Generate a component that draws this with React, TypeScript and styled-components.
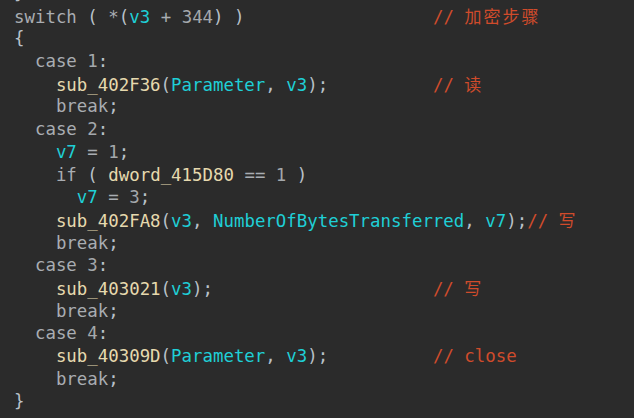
import React from "react";
import styled, { createGlobalStyle } from "styled-components";

const GlobalStyle = createGlobalStyle`
  html, body {
    margin: 0;
    padding: 0;
    background: #2b2b2b;
    overflow: hidden;
  }
`;

type Kind = "kw" | "num" | "fn" | "var" | "punc" | "op" | "cmt" | "ws";

const colors: Record<Kind, string> = {
  kw: "#a9adb2",
  num: "#a4a8ac",
  fn: "#e6d9ae",
  var: "#1fcfd6",
  punc: "#b9c1c9",
  op: "#a9adb2",
  cmt: "#d04b2b",
  ws: "inherit",
};

const Viewport = styled.div`
  width: 634px;
  height: 418px;
  overflow: hidden;
  background: #2b2b2b;
`;

const Code = styled.div`
  display: flex;
  flex-direction: column;
  margin-top: -18px;
  padding-left: 14px;
  font-family: "DejaVu Sans Mono", "Liberation Mono", "Noto Sans CJK SC", monospace;
  font-size: 17.4px;
`;

const Line = styled.div`
  height: 22.7px;
  line-height: 22.7px;
  white-space: pre;
`;

const Tok = styled.span<{ $k: Kind }>`
  color: ${(p) => colors[p.$k]};
`;

const Cjk = styled.span`
  font-family: "Noto Sans CJK SC", sans-serif;
  font-size: 17px;
  letter-spacing: 2px;
`;

type T = [Kind, string];

const k = (s: string): T => ["kw", s];
const n = (s: string): T => ["num", s];
const f = (s: string): T => ["fn", s];
const v = (s: string): T => ["var", s];
const p = (s: string): T => ["punc", s];
const o = (s: string): T => ["op", s];
const w = (s: string): T => ["ws", s];
const c = (s: string): T => ["cmt", s];

const pad = (toks: T[], col: number): T => {
  const len = toks.reduce((a, t) => a + t[1].length, 0);
  return w(" ".repeat(Math.max(0, col - len)));
};

const withComment = (toks: T[], comment: string): T[] => [
  ...toks,
  pad(toks, 40),
  c(comment),
];

const lines: T[][] = [
  [p("}")],
  withComment(
    [k("switch"), w(" "), p("("), w(" "), o("*"), p("("), v("v3"), w(" "), o("+"), w(" "), n("344"), p(")"), w(" "), p(")")],
    "// 加密步骤"
  ),
  [p("{")],
  [w("  "), k("case"), w(" "), n("1"), p(":")],
  withComment(
    [w("    "), f("sub_402F36"), p("("), v("Parameter"), p(","), w(" "), v("v3"), p(")"), p(";")],
    "// 读"
  ),
  [w("    "), k("break"), p(";")],
  [w("  "), k("case"), w(" "), n("2"), p(":")],
  [w("    "), v("v7"), w(" "), o("="), w(" "), n("1"), p(";")],
  [w("    "), k("if"), w(" "), p("("), w(" "), f("dword_415D80"), w(" "), o("=="), w(" "), n("1"), w(" "), p(")")],
  [w("      "), v("v7"), w(" "), o("="), w(" "), n("3"), p(";")],
  [
    w("    "), f("sub_402FA8"), p("("), v("v3"), p(","), w(" "), v("NumberOfBytesTransferred"),
    p(","), w(" "), v("v7"), p(")"), p(";"), c("// 写"),
  ],
  [w("    "), k("break"), p(";")],
  [w("  "), k("case"), w(" "), n("3"), p(":")],
  withComment([w("    "), f("sub_403021"), p("("), v("v3"), p(")"), p(";")], "// 写"),
  [w("    "), k("break"), p(";")],
  [w("  "), k("case"), w(" "), n("4"), p(":")],
  withComment(
    [w("    "), f("sub_40309D"), p("("), v("Parameter"), p(","), w(" "), v("v3"), p(")"), p(";")],
    "// close"
  ),
  [w("    "), k("break"), p(";")],
  [p("}")],
];

const renderText = (s: string) => {
  const parts = s.split(/([\u4e00-\u9fff]+)/);
  return parts.map((part, i) =>
    /[\u4e00-\u9fff]/.test(part) ? <Cjk key={i}>{part}</Cjk> : part
  );
};

export default function App() {
  return (
    <Viewport>
      <GlobalStyle />
      <Code>
        {lines.map((toks, i) => (
          <Line key={i}>
            {toks.map(([kind, text], j) => (
              <Tok key={j} $k={kind}>
                {kind === "cmt" ? renderText(text) : text}
              </Tok>
            ))}
          </Line>
        ))}
      </Code>
    </Viewport>
  );
}
